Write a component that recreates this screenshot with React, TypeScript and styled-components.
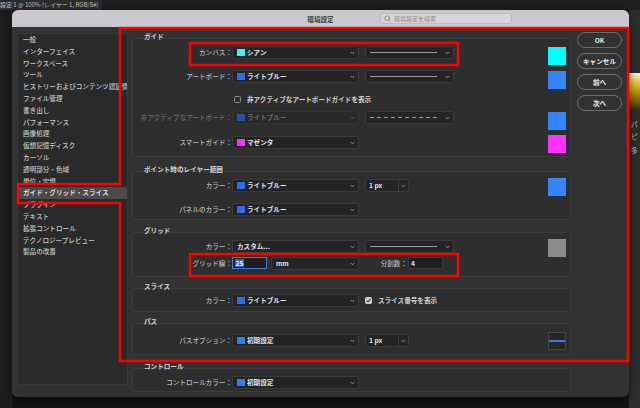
import styled, { createGlobalStyle } from "styled-components";
import { Search } from "lucide-react";

const FONT = `"Noto Sans CJK JP", "Noto Sans", sans-serif`;

const GlobalStyle = createGlobalStyle`
  html, body {
    margin: 0;
    padding: 0;
    background: #161616;
  }
  body {
    font-family: ${FONT};
    -webkit-font-smoothing: antialiased;
  }
  * {
    box-sizing: border-box;
  }
`;

// ---------- photoshop behind the dialog ----------

const Screen = styled.div`
  position: relative;
  width: 640px;
  height: 408px;
  overflow: hidden;
  background: #161616;
  display: flex;
  flex-direction: column;
`;

const DocBar = styled.div`
  height: 10px;
  flex: none;
  display: flex;
  background: #1e1e1e;
`;

const DocTab = styled.div`
  padding-right: 4px;
  background: #2c2c2c;
  color: #c4c4c4;
  font-size: 6px;
  line-height: 9px;
  white-space: nowrap;
`;

const Workspace = styled.div`
  flex: 1;
  display: flex;
`;

const Gutter = styled.div`
  width: 12px;
  background: #1d1d1d;
  border-right: 1px solid #262626;
`;

const Canvas = styled.div`
  flex: 1;
  background: #141414;
`;

const SidePanel = styled.div`
  width: 11px;
  background: #2e2e2e;
  display: flex;
  flex-direction: column;
  color: #bdbdbd;
  font-size: 6.6px;
  line-height: 12px;
`;

const Gradient = styled.div`
  margin-top: 63px;
  height: 37px;
  background: linear-gradient(180deg, #fff6c0 0%, #c9a400 45%, #3a2f00 100%);
`;

const PanelText = styled.div<{ $mt: number }>`
  margin-top: ${(p) => p.$mt}px;
  padding-left: 2px;
  white-space: nowrap;
`;

// ---------- dialog ----------

const Dialog = styled.div`
  position: absolute;
  left: 12px;
  top: 10px;
  width: 617px;
  height: 387px;
  background: #323232;
  border-radius: 6px;
  overflow: hidden;
  box-shadow: 0 2px 10px rgba(0, 0, 0, 0.6);
  display: flex;
  flex-direction: column;
`;

const TitleBar = styled.div`
  height: 17px;
  flex: none;
  background: #cac8cc;
  display: grid;
  grid-template-columns: 1fr auto 1fr;
  align-items: center;
`;

const Title = styled.div`
  grid-column: 2;
  color: #3a3a3a;
  font-size: 6.6px;
  font-weight: 700;
`;

const SearchField = styled.div`
  grid-column: 3;
  justify-self: end;
  margin-right: 117px;
  width: 132px;
  height: 11px;
  display: flex;
  align-items: center;
  gap: 3px;
  padding-left: 3px;
  background: #d6d4d8;
  border: 1px solid #bdbbc0;
  border-radius: 3px;
  color: #8e8c90;
  font-size: 6px;
`;

const Body = styled.div`
  flex: 1;
  display: flex;
  padding: 5px 0 0 5px;
`;

const Sidebar = styled.div`
  width: 111px;
  height: 352px;
  margin-top: 1px;
  flex: none;
  background: #2a2a2a;
  border: 1px solid #383838;
  display: flex;
  flex-direction: column;
`;

const NavItem = styled.div<{ $active?: boolean }>`
  height: 11.8px;
  padding-left: 5px;
  font-size: 6.6px;
  line-height: 11.8px;
  font-weight: 500;
  white-space: nowrap;
  overflow: hidden;
  color: ${(p) => (p.$active ? "#f2f2f2" : "#c6c6c6")};
  background: ${(p) => (p.$active ? "#4a4a4a" : "transparent")};
`;

const Content = styled.div`
  width: 439px;
  margin-left: 4px;
  flex: none;
  display: flex;
  flex-direction: column;
`;

const Section = styled.section<{ $mt: number }>`
  margin-top: ${(p) => p.$mt}px;
  display: flex;
  flex-direction: column;
`;

const SectionTitle = styled.div`
  position: relative;
  padding-left: 12px;
  margin-bottom: -2px;
  font-size: 6.6px;
  line-height: 8px;
  font-weight: 700;
  color: #d4d4d4;
`;

const SectionBox = styled.div<{ $h: number; $pt: number }>`
  height: ${(p) => p.$h}px;
  padding-top: ${(p) => p.$pt}px;
  border: 1px solid #3c3c3c;
  border-radius: 2px;
  background: #2e2e2e;
  display: flex;
  flex-direction: column;
`;

const Row = styled.div<{ $mt?: number }>`
  flex: none;
  height: 13px;
  margin-top: ${(p) => p.$mt ?? 0}px;
  display: flex;
  align-items: flex-start;
`;

const CheckRow = styled(Row)`
  height: 11px;
  padding-left: 101px;
  align-items: center;
`;

const Label = styled.div<{ $dim?: boolean; $w?: number }>`
  flex: none;
  width: ${(p) => p.$w ?? 99}px;
  text-align: right;
  font-size: 6.6px;
  line-height: 13px;
  font-weight: 500;
  white-space: nowrap;
  color: ${(p) => (p.$dim ? "#686868" : "#b4b4b4")};
`;

const DropDown = styled.div<{ $w: number; $dim?: boolean; $ml?: number }>`
  flex: none;
  width: ${(p) => p.$w}px;
  height: 13px;
  margin-left: ${(p) => p.$ml ?? 0}px;
  display: flex;
  align-items: center;
  padding: 0 3px 0 4px;
  background: ${(p) => (p.$dim ? "#292929" : "#242424")};
  border: 1px solid ${(p) => (p.$dim ? "#343434" : "#3a3a3a")};
  border-radius: 2px;
  color: ${(p) => (p.$dim ? "#6a6a6a" : "#e4e4e4")};
  font-size: 6.6px;
  font-weight: 700;
  line-height: 11px;
`;

const Chip = styled.span<{ $c: string; $dim?: boolean }>`
  flex: none;
  width: 8px;
  height: 7px;
  margin-right: 2px;
  background: ${(p) => p.$c};
  opacity: ${(p) => (p.$dim ? 0.6 : 1)};
`;

const ValueText = styled.span`
  flex: 1;
  white-space: nowrap;
  overflow: hidden;
`;

const StrokeLine = styled.span<{ $dashed?: boolean }>`
  flex: 1;
  height: 1.5px;
  margin-right: 8px;
  background: ${(p) =>
    p.$dashed
      ? "repeating-linear-gradient(90deg, #9a9a9a 0 4px, transparent 4px 7px)"
      : "#9c9c9c"};
`;

const BigSwatch = styled.div<{ $c: string; $mt?: number }>`
  flex: none;
  width: 18px;
  height: 18px;
  margin-left: auto;
  margin-right: 4px;
  margin-top: ${(p) => p.$mt ?? 1}px;
  background: ${(p) => p.$c};
`;

const LineSwatch = styled(BigSwatch)`
  background: #262626;
  border: 1px solid #444;
  display: flex;
  align-items: center;

  &::after {
    content: "";
    flex: 1;
    height: 1.5px;
    background: #2a84e0;
  }
`;

const PxBox = styled.div`
  flex: none;
  width: 44px;
  height: 13px;
  margin-left: 6px;
  display: flex;
  background: #242424;
  border: 1px solid #3a3a3a;
  border-radius: 2px;
`;

const PxText = styled.span`
  flex: 1;
  padding-left: 3px;
  font-size: 6.6px;
  font-weight: 700;
  line-height: 11px;
  color: #e4e4e4;
`;

const PxArrow = styled.span`
  width: 10px;
  border-left: 1px solid #3a3a3a;
  display: flex;
  align-items: center;
  justify-content: center;
`;

const NumField = styled.div<{ $focus?: boolean; $ml?: number }>`
  flex: none;
  width: 35px;
  height: 12px;
  margin-left: ${(p) => p.$ml ?? 0}px;
  display: flex;
  align-items: center;
  padding-left: 2px;
  background: #1e1e1e;
  border: 1px solid ${(p) => (p.$focus ? "#3f7fd8" : "#3a3a3a")};
  font-size: 6.6px;
  font-weight: 700;
  line-height: 8px;
  color: #e4e4e4;
`;

const Selection = styled.span`
  background: #3467ba;
  color: #ffffff;
  padding: 0 0.5px;
`;

const CheckBox = styled.span<{ $checked?: boolean; $ml?: number }>`
  flex: none;
  width: 7px;
  height: 7px;
  margin-left: ${(p) => p.$ml ?? 0}px;
  margin-top: ${(p) => (p.$checked ? 3 : 0)}px;
  border-radius: 1.5px;
  border: 1px solid ${(p) => (p.$checked ? "#d2d2d2" : "#8a8a8a")};
  background: ${(p) => (p.$checked ? "#d2d2d2" : "transparent")};
  display: flex;
  align-items: center;
  justify-content: center;
`;

const CheckText = styled.span`
  margin-left: 6px;
  font-size: 6.6px;
  font-weight: 700;
  line-height: 13px;
  white-space: nowrap;
  color: #d0d0d0;
`;

const Buttons = styled.div`
  width: 45px;
  margin-left: 6px;
  flex: none;
  display: flex;
  flex-direction: column;
  gap: 5px;
`;

const PillButton = styled.button`
  height: 16px;
  padding: 0;
  border-radius: 8px;
  border: 1px solid #6c6c6c;
  background: transparent;
  color: #ececec;
  font-family: ${FONT};
  font-size: 6.6px;
  font-weight: 700;
`;

const Overlay = styled.svg`
  position: absolute;
  left: 0;
  top: 0;
  width: 640px;
  height: 408px;
  pointer-events: none;
`;

// ---------- small parts ----------

const Chevron = ({ dim }: { dim?: boolean }) => (
  <svg width="5" height="4" viewBox="0 0 5 4">
    <path
      d="M0.8 1.1 L2.5 2.8 L4.2 1.1"
      fill="none"
      stroke={dim ? "#5a5a5a" : "#9a9a9a"}
      strokeWidth="0.9"
    />
  </svg>
);

const Tick = () => (
  <svg width="5" height="5" viewBox="0 0 5 5">
    <path d="M0.8 2.6 L2 3.8 L4.3 1.1" fill="none" stroke="#2a2a2a" strokeWidth="1.1" />
  </svg>
);

type SelectProps = { w: number; text: string; chip?: string; dim?: boolean; ml?: number };

const Select = ({ w, text, chip, dim, ml }: SelectProps) => (
  <DropDown $w={w} $dim={dim} $ml={ml}>
    {chip && <Chip $c={chip} $dim={dim} />}
    <ValueText>{text}</ValueText>
    <Chevron dim={dim} />
  </DropDown>
);

const LineSelect = ({ dashed }: { dashed?: boolean }) => (
  <DropDown $w={89} $ml={6}>
    <StrokeLine $dashed={dashed} />
    <Chevron />
  </DropDown>
);

const PxSelect = () => (
  <PxBox>
    <PxText>1 px</PxText>
    <PxArrow>
      <Chevron />
    </PxArrow>
  </PxBox>
);

const navItems = [
  "一般",
  "インターフェイス",
  "ワークスペース",
  "ツール",
  "ヒストリーおよびコンテンツ認証情報",
  "ファイル管理",
  "書き出し",
  "パフォーマンス",
  "画像処理",
  "仮想記憶ディスク",
  "カーソル",
  "透明部分・色域",
  "単位・定規",
  "ガイド・グリッド・スライス",
  "プラグイン",
  "テキスト",
  "拡張コントロール",
  "テクノロジープレビュー",
  "製品の改善",
];

const CYAN = "#3cf5f2";
const BLUE = "#2f6cf2";
const DEFAULT_BLUE = "#2b82e6";

const App = () => {
  return (
    <Screen>
      <GlobalStyle />
      <DocBar>
        <DocTab>設定 1 @ 100% (レイヤー 1, RGB/8#)</DocTab>
      </DocBar>
      <Workspace>
        <Gutter />
        <Canvas />
        <SidePanel>
          <Gradient />
          <PanelText $mt={8}>パ</PanelText>
          <PanelText $mt={0}>ピ</PanelText>
          <PanelText $mt={2}>多</PanelText>
        </SidePanel>
      </Workspace>

      <Dialog>
        <TitleBar>
          <Title>環境設定</Title>
          <SearchField>
            <Search size={7} color="#6a686c" strokeWidth={2.2} />
            環境設定を検索
          </SearchField>
        </TitleBar>

        <Body>
          <Sidebar>
            {navItems.map((item) => (
              <NavItem key={item} $active={item === "ガイド・グリッド・スライス"}>
                {item}
              </NavItem>
            ))}
          </Sidebar>

          <Content>
            <Section $mt={0}>
              <SectionTitle>ガイド</SectionTitle>
              <SectionBox $h={119} $pt={7}>
                <Row>
                  <Label>カンバス：</Label>
                  <Select w={127} chip={CYAN} text="シアン" />
                  <LineSelect />
                  <BigSwatch $c="#00ffff" />
                </Row>
                <Row $mt={11}>
                  <Label>アートボード：</Label>
                  <Select w={127} chip={BLUE} text="ライトブルー" />
                  <LineSelect />
                  <BigSwatch $c="#3386ff" />
                </Row>
                <CheckRow $mt={11}>
                  <CheckBox />
                  <CheckText>非アクティブなアートボードガイドを表示</CheckText>
                </CheckRow>
                <Row $mt={6}>
                  <Label $dim>非アクティブなアートボード：</Label>
                  <Select w={127} chip={BLUE} text="ライトブルー" dim />
                  <LineSelect dashed />
                  <BigSwatch $c="#3386ff" />
                </Row>
                <Row $mt={12}>
                  <Label>スマートガイド：</Label>
                  <Select w={127} chip="#f536f5" text="マゼンタ" />
                  <BigSwatch $c="#ff33ff" $mt={-1} />
                </Row>
              </SectionBox>
            </Section>

            <Section $mt={8}>
              <SectionTitle>ポイント時のレイヤー範囲</SectionTitle>
              <SectionBox $h={49} $pt={7}>
                <Row>
                  <Label>カラー：</Label>
                  <Select w={127} chip={BLUE} text="ライトブルー" />
                  <PxSelect />
                  <BigSwatch $c="#3386ff" $mt={-1} />
                </Row>
                <Row $mt={11}>
                  <Label>パネルのカラー：</Label>
                  <Select w={127} chip={BLUE} text="ライトブルー" />
                </Row>
              </SectionBox>
            </Section>

            <Section $mt={6}>
              <SectionTitle>グリッド</SectionTitle>
              <SectionBox $h={45} $pt={7}>
                <Row>
                  <Label>カラー：</Label>
                  <Select w={127} text="カスタム..." />
                  <LineSelect />
                  <BigSwatch $c="#8c8c8c" $mt={-1} />
                </Row>
                <Row $mt={4}>
                  <Label>グリッド線：</Label>
                  <NumField $focus>
                    <Selection>25</Selection>
                  </NumField>
                  <Select w={88} ml={4} text="mm" />
                  <Label $w={48}>分割数：</Label>
                  <NumField $ml={1}>4</NumField>
                </Row>
              </SectionBox>
            </Section>

            <Section $mt={5}>
              <SectionTitle>スライス</SectionTitle>
              <SectionBox $h={24} $pt={5}>
                <Row>
                  <Label>カラー：</Label>
                  <Select w={127} chip={BLUE} text="ライトブルー" />
                  <CheckBox $checked $ml={6}>
                    <Tick />
                  </CheckBox>
                  <CheckText>スライス番号を表示</CheckText>
                </Row>
              </SectionBox>
            </Section>

            <Section $mt={5}>
              <SectionTitle>パス</SectionTitle>
              <SectionBox $h={32} $pt={10}>
                <Row>
                  <Label>パスオプション：</Label>
                  <Select w={127} chip={DEFAULT_BLUE} text="初期設定" />
                  <PxSelect />
                  <LineSwatch $c="#262626" $mt={-2} />
                </Row>
              </SectionBox>
            </Section>

            <Section $mt={7}>
              <SectionTitle>コントロール</SectionTitle>
              <SectionBox $h={24} $pt={7}>
                <Row>
                  <Label>コントロールカラー：</Label>
                  <Select w={127} chip={DEFAULT_BLUE} text="初期設定" />
                </Row>
              </SectionBox>
            </Section>
          </Content>

          <Buttons>
            <PillButton>OK</PillButton>
            <PillButton>キャンセル</PillButton>
            <PillButton>前へ</PillButton>
            <PillButton>次へ</PillButton>
          </Buttons>
        </Body>
      </Dialog>

      <Overlay viewBox="0 0 640 408">
        <g fill="none" stroke="#ff0000" strokeWidth="2.5">
          <path d="M120 28 H628 V361 H120 V203 H18 V184 H120 Z" />
          <rect x="190" y="43" width="268" height="22" />
          <rect x="190" y="254" width="268" height="22" />
        </g>
      </Overlay>
    </Screen>
  );
};

export default App;
